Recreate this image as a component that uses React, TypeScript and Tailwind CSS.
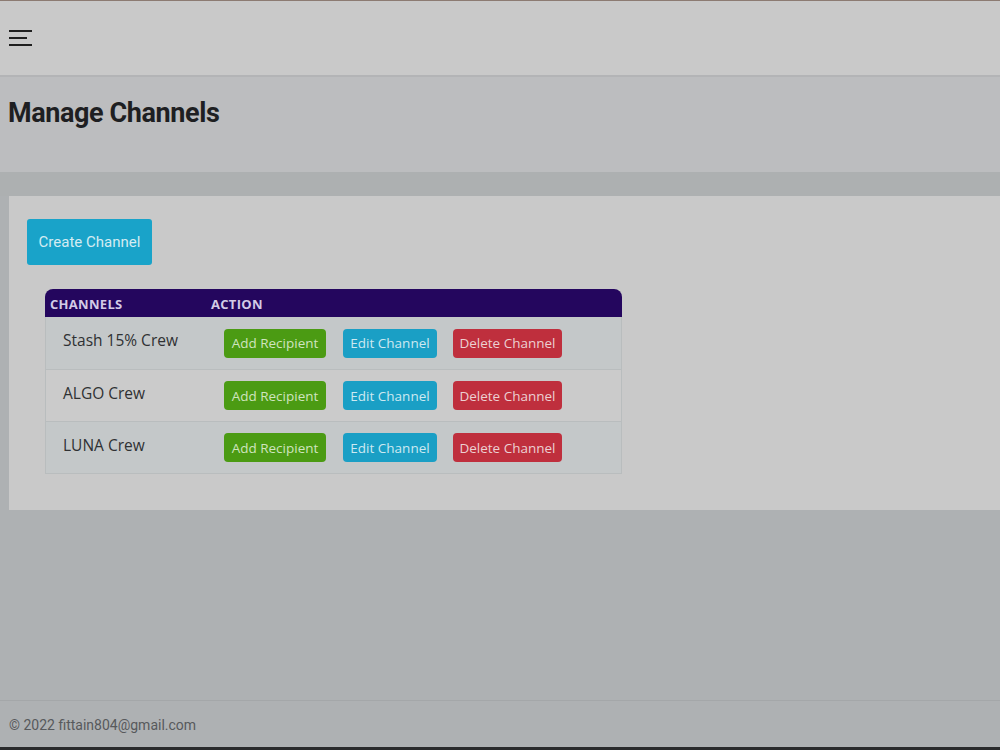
import React from "react";

const channels = ["Stash 15% Crew", "ALGO Crew", "LUNA Crew"];

function Hamburger() {
  return (
    <svg width="24" height="18" viewBox="0 0 24 18" className="block">
      <rect x="0" y="1" width="23" height="2" fill="#1f1f1f" />
      <rect x="0" y="8" width="18" height="2" fill="#1f1f1f" />
      <rect x="0" y="15" width="23" height="2" fill="#1f1f1f" />
    </svg>
  );
}

export default function App() {
  return (
    <div className="flex h-[750px] w-[1000px] flex-col overflow-hidden bg-[#aeb1b3] font-['Roboto',sans-serif]">
      <header className="flex h-[77px] shrink-0 items-center border-t border-b-2 border-t-[#8c7b72] border-b-[#b3b4b6] bg-[#c9c9c9] pl-[9px]">
        <Hamburger />
      </header>

      <div className="flex h-[95px] shrink-0 items-center bg-[#bcbdbf] pl-[8px]">
        <h1 className="-mt-[22px] text-[27px] font-bold tracking-[-0.4px] text-[#1e1f22]">
          Manage Channels
        </h1>
      </div>

      <div className="h-[24px] shrink-0 bg-[#adb0b1]" />

      <div className="ml-[9px] h-[314px] shrink-0 bg-[#c9c9c9] pl-[18px] pt-[23px]">
        <button className="h-[46px] w-[125px] rounded-[3px] bg-[#19a3c9] text-[15px] text-[#d4ecf2]">
          Create Channel
        </button>

        <div className="ml-[18px] mt-[24px] w-[577px] font-['Open_Sans',sans-serif]">
          <div className="flex h-[28px] items-center rounded-t-[8px] bg-[#24065e] pt-[3px] text-[13px] font-bold tracking-[0.3px] text-[#d3cbe6]">
            <div className="w-[161px] pl-[5px]">CHANNELS</div>
            <div className="pl-[5px]">ACTION</div>
          </div>
          <div className="border border-t-0 border-[#b9bdbe]">
            {channels.map((name, i) => (
              <div
                key={name}
                className={`flex h-[52px] items-center ${
                  i === 1 ? "bg-[#cbcbcb]" : "bg-[#c4c8c9]"
                } ${i > 0 ? "border-t border-[#b9bdbe]" : ""}`}
              >
                <div className="w-[160px] pb-[4px] pl-[17px] text-[15.5px] text-[#2f3133]">
                  {name}
                </div>
                <div className="flex items-center pl-[18px] text-[13.5px]">
                  <button className="h-[29px] w-[102px] rounded-[4px] bg-[#4b9b13] pt-[1px] text-[#cfe4bf]">
                    Add Recipient
                  </button>
                  <button className="ml-[17px] h-[29px] w-[94px] rounded-[4px] bg-[#1a9fc5] pt-[1px] text-[#cde9f1]">
                    Edit Channel
                  </button>
                  <button className="ml-[16px] h-[29px] w-[109px] rounded-[4px] bg-[#bf2f3d] pt-[1px] text-[#ecd0d2]">
                    Delete Channel
                  </button>
                </div>
              </div>
            ))}
          </div>
        </div>
      </div>

      <div className="flex-1" />

      <footer className="flex h-[47px] shrink-0 items-center border-t border-[#a4a7a9] pl-[9px] pt-[2px] text-[14px] text-[#57595c]">
        © 2022 fittain804@gmail.com
      </footer>
      <div className="h-[3px] shrink-0 bg-[#2a2b2d]" />
    </div>
  );
}
